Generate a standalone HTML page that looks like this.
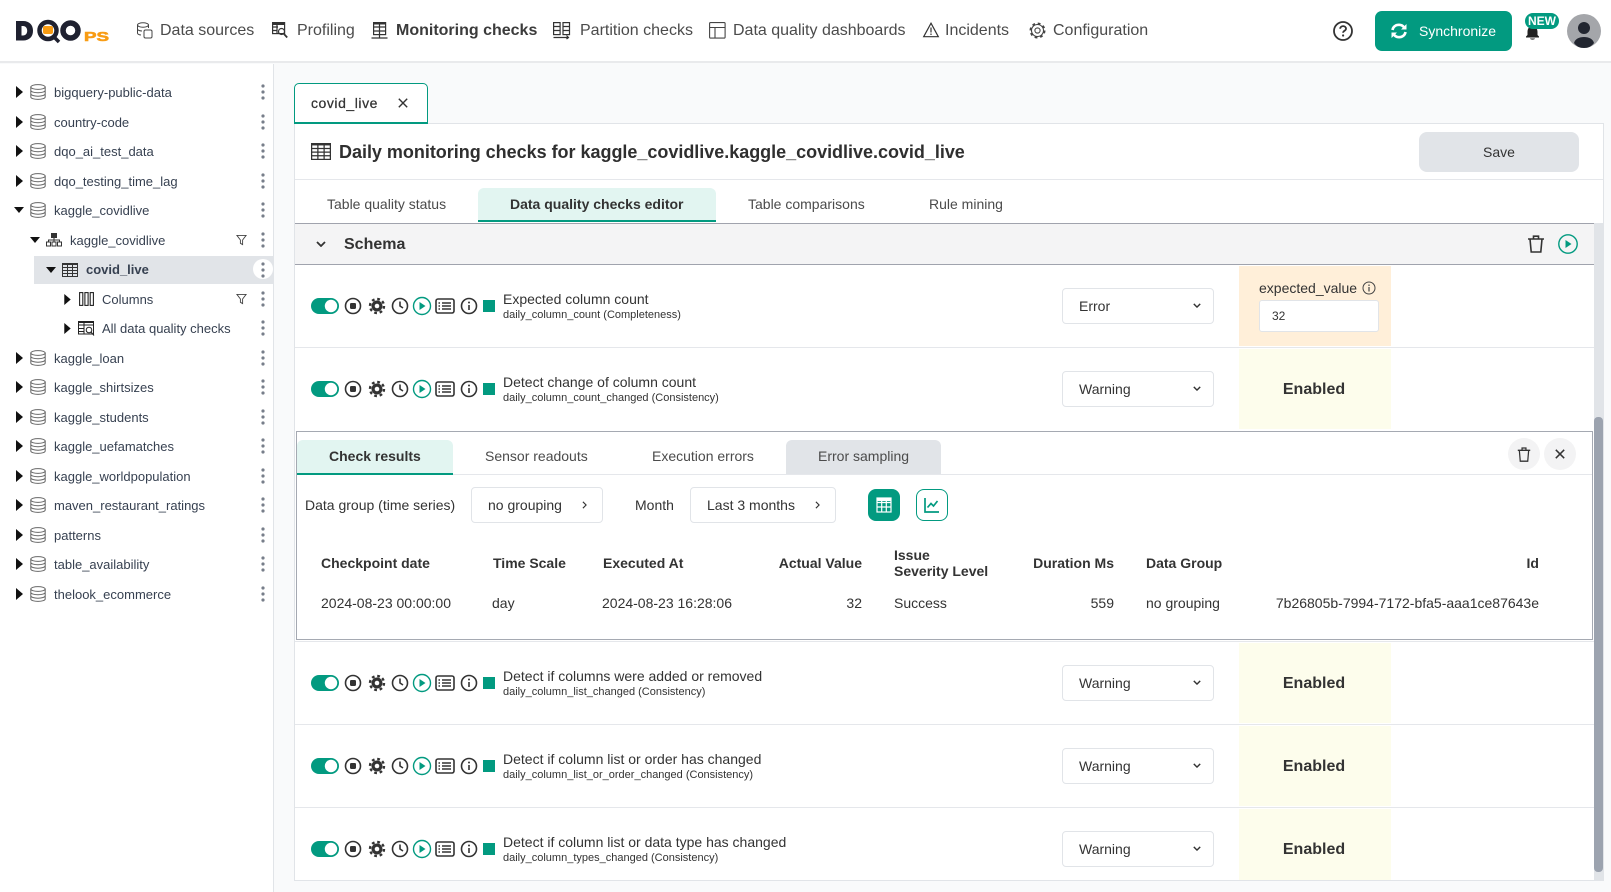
<!DOCTYPE html>
<html lang="en"><head><meta charset="utf-8"><title>DQOps</title>
<style>
*{box-sizing:border-box}
html,body{margin:0;padding:0;width:1611px;height:892px;overflow:hidden;background:#f9fafb;font-family:"Liberation Sans",sans-serif;color:#333;font-size:14px}
.a{position:absolute}
.t{position:absolute;white-space:nowrap;line-height:20px}
svg{position:absolute;overflow:visible;display:block}
.nav{font-size:16px;color:#4b4b4b;top:21px}
.b{font-weight:700}
.r{position:absolute;left:0;width:273px;height:0}
.r .t{top:-9px;font-size:13px;color:#374151}
.r svg{top:-8px}
.sel{position:absolute;left:1062px;width:152px;height:36px;background:#fff;border:1px solid #e1e4e8;border-radius:4px}
.sel span{position:absolute;left:16px;top:7px;line-height:20px}
.cell{position:absolute;left:1239px;width:152px;background:#fdfdec}
.sep{position:absolute;left:295px;width:1299px;height:1px;background:#e5e7eb}
.pick{position:absolute;background:#fff;border:1px solid #e1e4e8;border-radius:4px;height:36px;top:487px}
.h{font-weight:700;top:553px}
.v{top:593px}
.rt{text-align:right}
.sub{font-size:11px}
</style></head><body>
<svg width="0" height="0" style="position:absolute">
<defs>
<symbol id="db" viewBox="0 0 16 16"><g fill="none" stroke="#666" stroke-width="1"><ellipse cx="8" cy="3" rx="7.2" ry="2.4"/><path d="M.8 3v10c0 1.3 3.2 2.4 7.2 2.4s7.2-1.1 7.2-2.4V3M.8 6.4c0 1.3 3.2 2.4 7.2 2.4s7.2-1.1 7.2-2.4M.8 9.8c0 1.3 3.2 2.4 7.2 2.4s7.2-1.1 7.2-2.4"/></g></symbol>
<symbol id="keb" viewBox="0 0 6 18"><g fill="#777e8a"><circle cx="3" cy="3" r="1.6"/><circle cx="3" cy="9" r="1.6"/><circle cx="3" cy="15" r="1.6"/></g></symbol>
<symbol id="fil" viewBox="0 0 12 12"><path d="M1 1h10L7.2 6v5L4.8 9.6V6z" fill="none" stroke="#444" stroke-width="1"/></symbol>
<symbol id="tbl" viewBox="0 0 16 14"><g fill="none" stroke="#333" stroke-width="1"><rect x=".5" y=".5" width="15" height="13" /><path d="M.5 4.5h15M.5 7.5h15M.5 10.5h15M5.5 1v13M10.5 1v13"/></g><rect width="16" height="2" fill="#333"/></symbol>
<symbol id="row" viewBox="0 0 190 24">
<rect x="3" y="4" width="28" height="16" rx="8" fill="#029a80"/><circle cx="23" cy="12" r="6.2" fill="#fff"/>
<g fill="none" stroke="#333" stroke-width="1.6"><circle cx="45" cy="12" r="7.5"/><circle cx="92" cy="12" r="7.5"/><path d="M92 7.5V12l3 2"/><rect x="128" y="5" width="18" height="14" rx="2"/><path d="M134 9h9M134 12h9M134 15h9"/><path d="M130.5 9h1.5M130.5 12h1.5M130.5 15h1.5"/><circle cx="161" cy="12" r="7.5"/><path d="M161 11v5"/></g>
<rect x="42" y="9" width="6" height="6" rx="1.2" fill="#333"/>
<circle cx="69" cy="12" r="5.5" fill="#333"/><circle cx="69" cy="12" r="7" fill="none" stroke="#333" stroke-width="2.4" stroke-dasharray="2.75 2.75"/><circle cx="69" cy="12" r="2.3" fill="#fff"/>
<circle cx="161" cy="8.5" r="1" fill="#333"/>
<circle cx="114" cy="12" r="8.5" fill="none" stroke="#029a80" stroke-width="1.4"/><path d="M111.5 8l6 4-6 4z" fill="#029a80"/>
<rect x="175" y="6" width="12" height="12" fill="#029a80"/>
</symbol>
<symbol id="chev" viewBox="0 0 10 6"><path d="M1 1l4 4 4-4" fill="none" stroke="#333" stroke-width="1.800"/></symbol>
<symbol id="chr" viewBox="0 0 6 10"><path d="M1 1l4 4-4 4" fill="none" stroke="#333" stroke-width="1.400"/></symbol>
<symbol id="tr" viewBox="0 0 18 18"><g fill="none" stroke="#333" stroke-width="1.6"><path d="M1 4h16M3 4l1.2 13h9.6L15 4M6.5 4V1.2h5V4"/></g></symbol>
</defs></svg>

<!-- header -->
<div class="a" style="left:0;top:0;width:1611px;height:63px;background:#fff;border-bottom:2px solid #e9eaec"></div>
<svg style="left:16px;top:18px" width="94" height="26" viewBox="0 0 94 26">
<path d="M0 3h7c6.500 0 10 4 10 9.750S13.500 22.500 7 22.500H0zM5.500 8v9.500H7c2.600 0 4.200-2 4.200-4.750S9.600 8 7 8z" fill="#1f2130"/>
<circle cx="32" cy="12.500" r="8.500" fill="#fff" stroke="#1f2130" stroke-width="4.500"/><rect x="27" y="8" width="10" height="8" rx="2" fill="#f89c14"/><path d="M37 18l6 6" stroke="#1f2130" stroke-width="3.500"/>
<circle cx="54.500" cy="12.500" r="7.500" fill="#fff" stroke="#1f2130" stroke-width="5.500"/>
<text x="68" y="23" font-family="Liberation Sans" font-weight="700" font-size="13" fill="#f89c14" stroke="#f89c14" stroke-width=".6" textLength="25" lengthAdjust="spacingAndGlyphs">PS</text>
</svg>
<svg style="left:137px;top:22px" width="16" height="17" viewBox="0 0 16 17"><g fill="none" stroke="#444" stroke-width="1"><ellipse cx="6" cy="3" rx="5.500" ry="2.200"/><path d="M.5 3v8c0 1 1.500 1.800 3.500 2M11.500 3v3M.5 7c0 1 2 2 4.500 2M.500 11"/><rect x="7" y="8" width="8" height="8" rx="1.500"/></g></svg>
<div class="t nav" style="left:160px">Data sources</div>
<svg style="left:272px;top:22px" width="16" height="17" viewBox="0 0 16 17"><g fill="none" stroke="#333" stroke-width="1.200"><rect x=".6" y=".6" width="12" height="11"/><path d="M1 5h5M1 8.500h4M5 1v11"/><circle cx="9.500" cy="9.500" r="3"/><path d="M11.700 11.700l3.500 3.800" stroke-width="1.800"/></g><rect width="13" height="3" fill="#333"/></svg>
<div class="t nav" style="left:297px">Profiling</div>
<svg style="left:371px;top:22px" width="17" height="17" viewBox="0 0 17 17"><g fill="none" stroke="#333" stroke-width="1.200"><rect x="2.600" y=".6" width="12" height="12"/><path d="M3 5h11M3 9h11M8.500 1v11M8.500 13v3M.5 16h16"/></g><rect x="2" width="13" height="2.500" fill="#333"/></svg>
<div class="t nav b" style="left:396px;color:#3b3b3b">Monitoring checks</div>
<svg style="left:553px;top:22px" width="17" height="17" viewBox="0 0 17 17"><g fill="none" stroke="#333" stroke-width="1.200"><rect x=".6" y=".6" width="6.500" height="12"/><rect x="10" y=".6" width="6.500" height="12"/><path d="M1 4.500h6M1 8.500h6M10 4.500h6M10 8.500h6M.5 15.500h15M13.500 13.500l2 2-2 1.500"/></g></svg>
<div class="t nav" style="left:580px">Partition checks</div>
<svg style="left:709px;top:22px" width="17" height="17" viewBox="0 0 17 17"><g fill="none" stroke="#444" stroke-width="1.100"><rect x=".6" y=".6" width="15.500" height="15.500" rx="1"/><path d="M1 5.500h15M6 5.500v10.500"/></g></svg>
<div class="t nav" style="left:733px">Data quality dashboards</div>
<svg style="left:923px;top:22px" width="16" height="16" viewBox="0 0 16 16"><g fill="none" stroke="#333" stroke-width="1.200"><path d="M8 1.200L15.300 14.700H.7z"/><path d="M8 5.500v5M8 11.500v1.500"/></g></svg>
<div class="t nav" style="left:945px">Incidents</div>
<svg style="left:1029px;top:22px" width="17" height="17" viewBox="0 0 17 17"><g fill="none" stroke="#444" stroke-width="1.100"><circle cx="8.500" cy="8.500" r="2.600"/><circle cx="8.500" cy="8.500" r="6"/><circle cx="8.500" cy="8.500" r="7" stroke-width="2" stroke-dasharray="2.750 2.750"/></g><circle cx="8.500" cy="8.500" r="5" fill="#fff"/><circle cx="8.500" cy="8.500" r="2.600" fill="none" stroke="#444" stroke-width="1.100"/></svg>
<div class="t nav" style="left:1053px">Configuration</div>

<svg style="left:1333px;top:21px" width="20" height="20" viewBox="0 0 20 20"><circle cx="10" cy="10" r="9" fill="none" stroke="#333" stroke-width="1.800"/><path d="M7.200 7.800c0-3.600 5.800-3.600 5.800 0 0 2-2.900 2-2.900 4" fill="none" stroke="#333" stroke-width="1.800"/><circle cx="10.100" cy="14.500" r="1.100" fill="#333"/></svg>
<div class="a" style="left:1375px;top:11px;width:137px;height:40px;background:#029a80;border-radius:7px"></div>
<svg style="left:1391px;top:23px" width="16" height="16" viewBox="0 0 16 16"><g fill="none" stroke="#fff" stroke-width="2.600"><path d="M1.500 7C2 4 4.500 1.800 8 1.800c2.500 0 4 1 5 2.500M14.500 9C14 12 11.500 14.200 8 14.200c-2.500 0-4-1-5-2.500"/></g><path d="M15.500 1v5.500H10zM.5 15V9.500H6z" fill="#fff"/></svg>
<div class="t" style="left:1419px;top:21px;color:#fff;font-size:14px">Synchronize</div>
<svg style="left:1525px;top:26px" width="15" height="14" viewBox="0 0 15 14"><path d="M7.500 0C4 0 2.500 3 2.500 6v3L1 10.500V11.500h13v-1L12.500 9V6C12.500 3 11 0 7.500 0zM5 12.500h5C9.500 14 5.500 14 5 12.500z" fill="#222"/></svg>
<div class="a" style="left:1525px;top:13px;width:34px;height:16px;background:#029a80;border-radius:8px;color:#fff;font-weight:700;font-size:12px;line-height:16px;text-align:center">NEW</div>
<svg style="left:1567px;top:14px" width="34" height="34" viewBox="0 0 34 34"><circle cx="17" cy="17" r="17" fill="#a4a6aa"/><circle cx="17" cy="14" r="6" fill="#222630"/><path d="M7 29c1-4 5-6 10-6s9 2 10 6c-2.500 3.500-6 5-10 5s-7.500-1.500-10-5z" fill="#222630"/></svg>

<!-- sidebar -->
<div class="a" style="left:0;top:64px;width:274px;height:828px;background:#fff;border-right:1px solid #e1e4e8"></div>
<div class="a" style="left:34px;top:256px;width:239px;height:28px;background:#e1e4e8"></div>
<div class="a" style="left:253px;top:259px;width:20px;height:20px;border-radius:10px;background:#fff"></div>

<div class="r" style="top:92px"><svg style="left:16px;top:-6px" width="7" height="12" viewBox="0 0 7 12"><path d="M0 0l7 6-7 6z" fill="#111"/></svg><svg style="left:30px" width="16" height="16"><use href="#db"/></svg><div class="t" style="left:54px">bigquery-public-data</div><svg style="left:260px;top:-9px" width="6" height="18"><use href="#keb"/></svg></div>
<div class="r" style="top:122px"><svg style="left:16px;top:-6px" width="7" height="12" viewBox="0 0 7 12"><path d="M0 0l7 6-7 6z" fill="#111"/></svg><svg style="left:30px" width="16" height="16"><use href="#db"/></svg><div class="t" style="left:54px">country-code</div><svg style="left:260px;top:-9px" width="6" height="18"><use href="#keb"/></svg></div>
<div class="r" style="top:151px"><svg style="left:16px;top:-6px" width="7" height="12" viewBox="0 0 7 12"><path d="M0 0l7 6-7 6z" fill="#111"/></svg><svg style="left:30px" width="16" height="16"><use href="#db"/></svg><div class="t" style="left:54px">dqo_ai_test_data</div><svg style="left:260px;top:-9px" width="6" height="18"><use href="#keb"/></svg></div>
<div class="r" style="top:181px"><svg style="left:16px;top:-6px" width="7" height="12" viewBox="0 0 7 12"><path d="M0 0l7 6-7 6z" fill="#111"/></svg><svg style="left:30px" width="16" height="16"><use href="#db"/></svg><div class="t" style="left:54px">dqo_testing_time_lag</div><svg style="left:260px;top:-9px" width="6" height="18"><use href="#keb"/></svg></div>
<div class="r" style="top:210px"><svg style="left:14px;top:-3px" width="10" height="6" viewBox="0 0 10 6"><path d="M0 0h10L5 6z" fill="#111"/></svg><svg style="left:30px" width="16" height="16"><use href="#db"/></svg><div class="t" style="left:54px">kaggle_covidlive</div><svg style="left:260px;top:-9px" width="6" height="18"><use href="#keb"/></svg></div>
<div class="r" style="top:240px"><svg style="left:30px;top:-3px" width="10" height="6" viewBox="0 0 10 6"><path d="M0 0h10L5 6z" fill="#111"/></svg><svg style="left:46px;top:-7px" width="16" height="14" viewBox="0 0 16 14"><g fill="none" stroke="#333" stroke-width="1"><rect x="5.500" y=".5" width="5" height="4" fill="#333"/><rect x=".5" y="9" width="4" height="4"/><rect x="6" y="9" width="4" height="4"/><rect x="11.500" y="9" width="4" height="4"/><path d="M2.500 9V7h11v2M8 4.500V9"/></g></svg><div class="t" style="left:70px">kaggle_covidlive</div><svg style="left:236px;top:-6px" width="11" height="12"><use href="#fil"/></svg><svg style="left:260px;top:-9px" width="6" height="18"><use href="#keb"/></svg></div>
<div class="r" style="top:270px"><svg style="left:46px;top:-3px" width="10" height="6" viewBox="0 0 10 6"><path d="M0 0h10L5 6z" fill="#111"/></svg><svg style="left:62px;top:-7px" width="16" height="14"><use href="#tbl"/></svg><div class="t b" style="left:86px;top:-10px">covid_live</div><svg style="left:260px;top:-9px" width="6" height="18"><use href="#keb"/></svg></div>
<div class="r" style="top:299px"><svg style="left:64px;top:-5px" width="7" height="11" viewBox="0 0 7 12"><path d="M0 0l7 6-7 6z" fill="#111"/></svg><svg style="left:79px;top:-7px" width="15" height="14" viewBox="0 0 15 14"><g fill="none" stroke="#222" stroke-width="1.100"><rect x=".6" y=".6" width="3.200" height="12.800"/><rect x="5.900" y=".6" width="3.200" height="12.800"/><rect x="11.200" y=".6" width="3.200" height="12.800"/></g></svg><div class="t" style="left:102px">Columns</div><svg style="left:236px;top:-6px" width="11" height="12"><use href="#fil"/></svg><svg style="left:260px;top:-9px" width="6" height="18"><use href="#keb"/></svg></div>
<div class="r" style="top:328px"><svg style="left:64px;top:-5px" width="7" height="11" viewBox="0 0 7 12"><path d="M0 0l7 6-7 6z" fill="#111"/></svg><svg style="left:78px;top:-7px" width="17" height="15" viewBox="0 0 17 15"><g fill="none" stroke="#222" stroke-width="1"><rect x=".5" y=".5" width="15" height="12.500"/><path d="M1 4h15M1 7.500h5M1 10.500h5M6 1v12"/><circle cx="11" cy="9" r="2.800"/><path d="M13 11l3 3.500"/></g><rect width="16" height="2" fill="#222"/></svg><div class="t" style="left:102px">All data quality checks</div><svg style="left:260px;top:-9px" width="6" height="18"><use href="#keb"/></svg></div>
<div class="r" style="top:358px"><svg style="left:16px;top:-6px" width="7" height="12" viewBox="0 0 7 12"><path d="M0 0l7 6-7 6z" fill="#111"/></svg><svg style="left:30px" width="16" height="16"><use href="#db"/></svg><div class="t" style="left:54px">kaggle_loan</div><svg style="left:260px;top:-9px" width="6" height="18"><use href="#keb"/></svg></div>
<div class="r" style="top:387px"><svg style="left:16px;top:-6px" width="7" height="12" viewBox="0 0 7 12"><path d="M0 0l7 6-7 6z" fill="#111"/></svg><svg style="left:30px" width="16" height="16"><use href="#db"/></svg><div class="t" style="left:54px">kaggle_shirtsizes</div><svg style="left:260px;top:-9px" width="6" height="18"><use href="#keb"/></svg></div>
<div class="r" style="top:417px"><svg style="left:16px;top:-6px" width="7" height="12" viewBox="0 0 7 12"><path d="M0 0l7 6-7 6z" fill="#111"/></svg><svg style="left:30px" width="16" height="16"><use href="#db"/></svg><div class="t" style="left:54px">kaggle_students</div><svg style="left:260px;top:-9px" width="6" height="18"><use href="#keb"/></svg></div>
<div class="r" style="top:446px"><svg style="left:16px;top:-6px" width="7" height="12" viewBox="0 0 7 12"><path d="M0 0l7 6-7 6z" fill="#111"/></svg><svg style="left:30px" width="16" height="16"><use href="#db"/></svg><div class="t" style="left:54px">kaggle_uefamatches</div><svg style="left:260px;top:-9px" width="6" height="18"><use href="#keb"/></svg></div>
<div class="r" style="top:476px"><svg style="left:16px;top:-6px" width="7" height="12" viewBox="0 0 7 12"><path d="M0 0l7 6-7 6z" fill="#111"/></svg><svg style="left:30px" width="16" height="16"><use href="#db"/></svg><div class="t" style="left:54px">kaggle_worldpopulation</div><svg style="left:260px;top:-9px" width="6" height="18"><use href="#keb"/></svg></div>
<div class="r" style="top:505px"><svg style="left:16px;top:-6px" width="7" height="12" viewBox="0 0 7 12"><path d="M0 0l7 6-7 6z" fill="#111"/></svg><svg style="left:30px" width="16" height="16"><use href="#db"/></svg><div class="t" style="left:54px">maven_restaurant_ratings</div><svg style="left:260px;top:-9px" width="6" height="18"><use href="#keb"/></svg></div>
<div class="r" style="top:535px"><svg style="left:16px;top:-6px" width="7" height="12" viewBox="0 0 7 12"><path d="M0 0l7 6-7 6z" fill="#111"/></svg><svg style="left:30px" width="16" height="16"><use href="#db"/></svg><div class="t" style="left:54px">patterns</div><svg style="left:260px;top:-9px" width="6" height="18"><use href="#keb"/></svg></div>
<div class="r" style="top:564px"><svg style="left:16px;top:-6px" width="7" height="12" viewBox="0 0 7 12"><path d="M0 0l7 6-7 6z" fill="#111"/></svg><svg style="left:30px" width="16" height="16"><use href="#db"/></svg><div class="t" style="left:54px">table_availability</div><svg style="left:260px;top:-9px" width="6" height="18"><use href="#keb"/></svg></div>
<div class="r" style="top:594px"><svg style="left:16px;top:-6px" width="7" height="12" viewBox="0 0 7 12"><path d="M0 0l7 6-7 6z" fill="#111"/></svg><svg style="left:30px" width="16" height="16"><use href="#db"/></svg><div class="t" style="left:54px">thelook_ecommerce</div><svg style="left:260px;top:-9px" width="6" height="18"><use href="#keb"/></svg></div>

<!-- main card -->
<div class="a" style="left:294px;top:123px;width:1310px;height:758px;background:#fff;border:1px solid #e1e4e8"></div>
<div class="a" style="left:294px;top:83px;width:134px;height:41px;background:#fff;border:1px solid #029a80;border-bottom-width:2px;border-radius:5px 5px 0 0"></div>
<div class="t" style="left:311px;top:93px;-webkit-text-stroke:.25px #333;letter-spacing:.55px">covid_live</div>
<svg style="left:398px;top:98px" width="10" height="10" viewBox="0 0 10 10"><path d="M.8.8l8.400 8.400M9.200.8L.8 9.200" stroke="#333" stroke-width="1.400"/></svg>
<svg style="left:311px;top:143px" width="20" height="17" viewBox="0 0 16 14" preserveAspectRatio="none"><use href="#tbl" width="16" height="14"/></svg>
<div class="t b" style="left:339px;top:142px;font-size:18px;color:#2f2f2f;letter-spacing:-.02px">Daily monitoring checks for kaggle_covidlive.kaggle_covidlive.covid_live</div>
<div class="a" style="left:1419px;top:132px;width:160px;height:40px;background:#e1e4e8;border-radius:8px;line-height:40px;text-align:center">Save</div>
<div class="a" style="left:295px;top:179px;width:1308px;height:1px;background:#e5e7eb"></div>

<div class="a" style="left:478px;top:188px;width:238px;height:34px;background:#e2f5f1;border-bottom:2px solid #029a80;border-radius:6px 6px 0 0"></div>
<div class="t" style="left:327px;top:194px;color:#4b4b4b">Table quality status</div>
<div class="t b" style="left:510px;top:194px">Data quality checks editor</div>
<div class="t" style="left:748px;top:194px;color:#4b4b4b">Table comparisons</div>
<div class="t" style="left:929px;top:194px;color:#4b4b4b">Rule mining</div>

<div class="a" style="left:295px;top:223px;width:1299px;height:42px;background:#f4f4f5;border-top:1px solid #a0a3ad;border-bottom:1px solid #a0a3ad"></div>
<div class="a" style="left:1594px;top:223px;width:9px;height:657px;background:#e1e4e8"></div>
<div class="a" style="left:1594px;top:417px;width:9px;height:455px;background:#9ca3af;border-radius:4px"></div>
<svg style="left:316px;top:241px" width="10" height="6"><use href="#chev"/></svg>
<div class="t b" style="left:344px;top:235px;font-size:16px">Schema</div>
<svg style="left:1527px;top:235px" width="18" height="18"><use href="#tr"/></svg>
<svg style="left:1558px;top:234px" width="20" height="20" viewBox="0 0 20 20"><circle cx="10" cy="10" r="9.200" fill="none" stroke="#029a80" stroke-width="1.400"/><path d="M7.500 6l6 4-6 4z" fill="#029a80"/></svg>

<!-- row 1 -->
<div class="a" style="left:1239px;top:266px;width:152px;height:80px;background:#ffefd9"></div>
<svg style="left:308px;top:294px" width="190" height="24"><use href="#row"/></svg>
<div class="t" style="left:503px;top:289px">Expected column count</div>
<div class="t sub" style="left:503px;top:305px">daily_column_count (Completeness)</div>
<div class="sel" style="top:288px"><span>Error</span></div><svg style="left:1193px;top:303px" width="8" height="5" viewBox="0 0 10 6"><use href="#chev" width="10" height="6"/></svg>
<div class="t" style="left:1259px;top:278px">expected_value</div>
<svg style="left:1362px;top:281px" width="14" height="14" viewBox="0 0 14 14"><circle cx="7" cy="7" r="6" fill="none" stroke="#444" stroke-width="1"/><path d="M7 6v4.500M7 3.500v1.500" stroke="#444" stroke-width="1.200"/></svg>
<div class="a" style="left:1259px;top:300px;width:120px;height:32px;background:#fff;border:1px solid #e1e4e8;border-radius:3px;font-size:12px;line-height:30px;padding-left:12px">32</div>
<div class="sep" style="top:347px"></div>

<!-- row 2 -->
<div class="cell" style="top:349px;height:80px"></div>
<svg style="left:308px;top:377px" width="190" height="24"><use href="#row"/></svg>
<div class="t" style="left:503px;top:372px">Detect change of column count</div>
<div class="t sub" style="left:503px;top:388px">daily_column_count_changed (Consistency)</div>
<div class="sel" style="top:371px"><span>Warning</span></div><svg style="left:1193px;top:386px" width="8" height="5" viewBox="0 0 10 6"><use href="#chev" width="10" height="6"/></svg>
<div class="t b" style="left:1238px;width:152px;text-align:center;top:379.500px;font-size:16px">Enabled</div>

<!-- panel -->
<div class="a" style="left:296px;top:431px;width:1297px;height:209px;background:#fff;border:1px solid #a5a9b2"></div>
<div class="a" style="left:297px;top:474px;width:1295px;height:1px;background:#e5e7eb"></div>
<div class="a" style="left:297px;top:440px;width:156px;height:35px;background:#e2f5f1;border-bottom:2px solid #029a80;border-radius:6px 6px 0 0"></div>
<div class="t b" style="left:329px;top:446px">Check results</div>
<div class="t" style="left:485px;top:446px;color:#4b4b4b">Sensor readouts</div>
<div class="t" style="left:652px;top:446px;color:#4b4b4b">Execution errors</div>
<div class="a" style="left:786px;top:440px;width:155px;height:34px;background:#e1e4e8;border-radius:6px 6px 0 0"></div>
<div class="t" style="left:818px;top:446px;color:#4b4b4b">Error sampling</div>
<div class="a" style="left:1508px;top:438px;width:32px;height:32px;border-radius:16px;background:#f3f3f4"></div>
<div class="a" style="left:1544px;top:438px;width:32px;height:32px;border-radius:16px;background:#f3f3f4"></div>
<svg style="left:1517px;top:447px" width="14" height="15" viewBox="0 0 18 18" preserveAspectRatio="none"><use href="#tr" width="18" height="18"/></svg>
<svg style="left:1555px;top:449px" width="10" height="10" viewBox="0 0 10 10"><path d="M.8.8l8.400 8.400M9.200.8L.8 9.200" stroke="#333" stroke-width="1.500"/></svg>

<div class="t" style="left:305px;top:495px">Data group (time series)</div>
<div class="pick" style="left:471px;width:132px"></div>
<div class="t" style="left:488px;top:495px">no grouping</div>
<svg style="left:582px;top:501px" width="5" height="8" viewBox="0 0 6 10"><use href="#chr" width="6" height="10"/></svg>
<div class="t" style="left:635px;top:495px">Month</div>
<div class="pick" style="left:690px;width:146px"></div>
<div class="t" style="left:707px;top:495px">Last 3 months</div>
<svg style="left:815px;top:501px" width="5" height="8" viewBox="0 0 6 10"><use href="#chr" width="6" height="10"/></svg>
<div class="a" style="left:868px;top:489px;width:32px;height:32px;background:#029a80;border-radius:8px"></div>
<svg style="left:876px;top:497px" width="16" height="16" viewBox="0 0 16 16"><g fill="none" stroke="#fff" stroke-width="1.200"><rect x="1" y="1" width="14" height="14"/><path d="M1 5.500h14M1 10h14M5.700 1v14M10.300 1v14"/></g><rect x="1" y="1" width="14" height="3" fill="#fff"/></svg>
<div class="a" style="left:916px;top:489px;width:32px;height:32px;background:#fff;border:1px solid #029a80;border-radius:8px"></div>
<svg style="left:924px;top:497px" width="16" height="16" viewBox="0 0 16 16"><path d="M1 1v14h14M3.500 10.500l3.500-4 2.500 2.500 4-5" fill="none" stroke="#029a80" stroke-width="1.700"/></svg>

<div class="t h" style="left:321px">Checkpoint date</div>
<div class="t h" style="left:493px">Time Scale</div>
<div class="t h" style="left:603px">Executed At</div>
<div class="t h rt" style="left:762px;width:100px">Actual Value</div>
<div class="t b" style="left:894px;top:545px">Issue</div>
<div class="t b" style="left:894px;top:561px">Severity Level</div>
<div class="t h rt" style="left:1014px;width:100px">Duration Ms</div>
<div class="t h" style="left:1146px">Data Group</div>
<div class="t h rt" style="left:1439px;width:100px">Id</div>
<div class="t v" style="left:321px">2024-08-23 00:00:00</div>
<div class="t v" style="left:492px">day</div>
<div class="t v" style="left:602px">2024-08-23 16:28:06</div>
<div class="t v rt" style="left:762px;width:100px">32</div>
<div class="t v" style="left:894px">Success</div>
<div class="t v rt" style="left:1014px;width:100px">559</div>
<div class="t v" style="left:1146px">no grouping</div>
<div class="t v rt" style="left:1239px;width:300px">7b26805b-7994-7172-bfa5-aaa1ce87643e</div>
<div class="sep" style="top:641px"></div>

<!-- row 3 -->
<div class="cell" style="top:643px;height:80px"></div>
<svg style="left:308px;top:671px" width="190" height="24"><use href="#row"/></svg>
<div class="t" style="left:503px;top:666px">Detect if columns were added or removed</div>
<div class="t sub" style="left:503px;top:682px">daily_column_list_changed (Consistency)</div>
<div class="sel" style="top:665px"><span>Warning</span></div><svg style="left:1193px;top:680px" width="8" height="5" viewBox="0 0 10 6"><use href="#chev" width="10" height="6"/></svg>
<div class="t b" style="left:1238px;width:152px;text-align:center;top:673.500px;font-size:16px">Enabled</div>
<div class="sep" style="top:724px"></div>

<!-- row 4 -->
<div class="cell" style="top:726px;height:80px"></div>
<svg style="left:308px;top:754px" width="190" height="24"><use href="#row"/></svg>
<div class="t" style="left:503px;top:749px">Detect if column list or order has changed</div>
<div class="t sub" style="left:503px;top:765px">daily_column_list_or_order_changed (Consistency)</div>
<div class="sel" style="top:748px"><span>Warning</span></div><svg style="left:1193px;top:763px" width="8" height="5" viewBox="0 0 10 6"><use href="#chev" width="10" height="6"/></svg>
<div class="t b" style="left:1238px;width:152px;text-align:center;top:756.500px;font-size:16px">Enabled</div>
<div class="sep" style="top:807px"></div>

<!-- row 5 -->
<div class="cell" style="top:809px;height:71px"></div>
<svg style="left:308px;top:837px" width="190" height="24"><use href="#row"/></svg>
<div class="t" style="left:503px;top:832px">Detect if column list or data type has changed</div>
<div class="t sub" style="left:503px;top:848px">daily_column_types_changed (Consistency)</div>
<div class="sel" style="top:831px"><span>Warning</span></div><svg style="left:1193px;top:846px" width="8" height="5" viewBox="0 0 10 6"><use href="#chev" width="10" height="6"/></svg>
<div class="t b" style="left:1238px;width:152px;text-align:center;top:839.500px;font-size:16px">Enabled</div>
</body></html>
